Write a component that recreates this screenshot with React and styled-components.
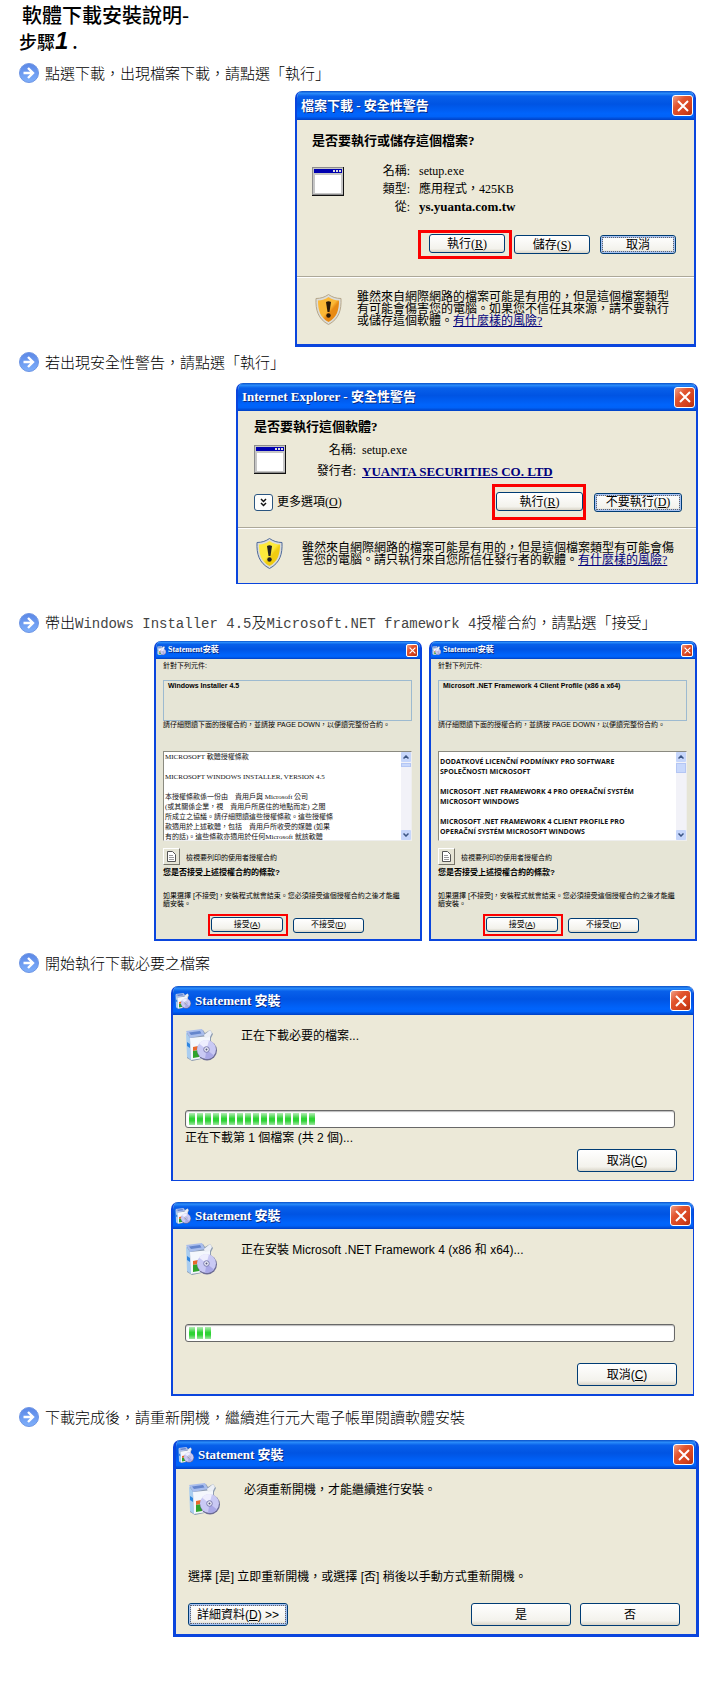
import styled, { createGlobalStyle, css } from "styled-components";

const GlobalStyle = createGlobalStyle`
    * {
        box-sizing: border-box;
        margin: 0;
        padding: 0;
    }

    body {
        background: #fff;
        color: #000;
        font-family: "Liberation Sans", "Noto Sans CJK TC", sans-serif;
        font-size: 12px;
    }
`;

const serif = `"Liberation Serif", "Noto Sans CJK TC", serif`;
const sans = `"Liberation Sans", "Noto Sans CJK TC", sans-serif`;

const Page = styled.main`
    display: flex;
    flex-direction: column;
    padding: 2px 12px 52px 19px;
`;

const PageTitle = styled.h1`
    padding-left: 3px;
    font-family: "Noto Sans CJK TC", sans-serif;
    font-size: 20px;
    font-weight: 500;
    line-height: 26px;
`;

const PageSubtitle = styled.h2`
    margin-bottom: 9px;
    font-family: "Noto Sans CJK TC", sans-serif;
    font-size: 18px;
    font-weight: 500;
    line-height: 26px;
`;

const StepNumber = styled.span`
    margin-right: 4px;
    font-family: "Liberation Sans", sans-serif;
    font-size: 24px;
    font-style: italic;
    font-weight: 700;
`;

const Step = styled.section`
    display: flex;
    flex-direction: column;
    gap: ${({ $gap }) => $gap}px;
    margin-bottom: ${({ $after }) => $after || 0}px;
`;

const StepHeading = styled.h3`
    display: flex;
    align-items: center;
    gap: 6px;
    height: 20px;
    color: #000;
    font-family: "Noto Sans CJK TC", sans-serif;
    font-size: 15px;
    font-weight: 300;
    line-height: 20px;
    white-space: nowrap;

    svg {
        flex: none;
    }
`;

const Mono = styled.span`
    color: #444;
    font-family: "Liberation Mono", monospace;
    font-size: 14px;
`;

const Dialogs = styled.div`
    display: flex;
    flex-direction: ${({ $stacked }) => ($stacked ? "column" : "row")};
    justify-content: flex-end;
    align-items: ${({ $stacked }) => ($stacked ? "flex-end" : "stretch")};
    gap: ${({ $gap }) => $gap || 0}px;
    padding-right: ${({ $inset }) => $inset || 0}px;
`;

const Window = styled.article`
    width: 100%;
    max-width: ${({ $width }) => $width}px;
    border: solid #0a45dd;
    border-width: ${({ $edge }) => $edge};
    border-radius: 7px 7px 0 0;
    background: ${({ $small }) => ($small ? "#e6e5d6" : "#ece9d8")};
    overflow: hidden;
`;

const barPadding = ({ $small, $icon }) => {
    if ($small) return "0 2px 0 1px";
    return $icon ? "0 2px" : "0 1px 0 4px";
};

const TitleBar = styled.header`
    display: flex;
    align-items: center;
    gap: ${({ $small }) => ($small ? 2 : 4)}px;
    height: ${({ $height }) => $height}px;
    padding: ${barPadding};
    background: linear-gradient(
        #0a50c8 0,
        #2a8cfa 8%,
        #0860ea 18%,
        #0054e3 45%,
        #0064fc 78%,
        #0062f8 88%,
        #0040c4 100%
    );
    color: #fff;

    svg {
        flex: none;
    }
`;

const TitleText = styled.h4`
    flex: 1;
    font-family: ${serif};
    font-size: ${({ $small }) => ($small ? 8 : 13)}px;
    font-weight: 700;
    line-height: 16px;
    text-shadow: 1px 1px 0 #0a2a80;
    white-space: nowrap;
`;

const CloseButton = styled.button`
    display: flex;
    align-items: center;
    justify-content: center;
    width: ${({ $small }) => ($small ? 12 : 21)}px;
    height: ${({ $small }) => ($small ? 13 : 21)}px;
    border: 1px solid #fff;
    border-radius: ${({ $small }) => ($small ? 2 : 3)}px;
    background: linear-gradient(135deg, #f0a088, #e2552f 35%, #d3401c 75%, #b03010);
    color: #fff;
`;

const Body = styled.div`
    display: flex;
    flex-direction: column;
    padding: ${({ $pad }) => $pad};
`;

const Question = styled.p`
    font-family: ${serif};
    font-size: 13px;
    font-weight: 700;
    line-height: 16px;
`;

const FileInfo = styled.div`
    display: flex;
    margin-top: ${({ $top }) => $top}px;

    svg {
        flex: none;
        margin-top: 5px;
    }
`;

const Details = styled.dl`
    display: grid;
    grid-template-columns: ${({ $label }) => $label}px auto;
    column-gap: ${({ $gap }) => $gap}px;
    font-family: ${serif};
    font-size: 12px;
    line-height: ${({ $line }) => $line}px;

    dt {
        text-align: right;
    }

    dd {
        white-space: nowrap;
    }
`;

const Strong = styled.strong`
    font-size: 13px;
`;

const Link = styled.a`
    color: #00007c;
    text-decoration: underline;
`;

const Actions = styled.div`
    display: flex;
    align-items: center;
    justify-content: flex-end;
    gap: ${({ $gap }) => $gap}px;
    margin-top: ${({ $top }) => $top || 0}px;
`;

const Highlight = styled.div`
    padding: ${({ $pad }) => $pad};
    border: ${({ $thin }) => ($thin ? 2 : 3)}px solid #fb0000;
`;

const PushButton = styled.button`
    display: block;
    width: ${({ $width }) => $width}px;
    height: ${({ $height }) => $height}px;
    border: 1px solid #003c74;
    border-radius: 3px;
    background: linear-gradient(#fff, #f3f2ec 80%, #d9d5c8);
    color: #000;
    font-family: ${({ $serif }) => ($serif ? serif : sans)};
    font-size: ${({ $small }) => ($small ? 8 : 12)}px;
    line-height: 12px;
    white-space: nowrap;

    ${({ $focused }) =>
        $focused &&
        css`
            box-shadow: inset 0 0 0 2px #a9c3f2;
            outline: 1px dotted #666;
            outline-offset: -3px;
        `}

    ${({ $pushLeft }) =>
        $pushLeft &&
        css`
            margin-right: auto;
        `}
`;

const MoreOptions = styled.label`
    display: flex;
    align-items: center;
    gap: 4px;
    margin-right: auto;
    font-family: ${serif};
    font-size: 12px;
    line-height: 16px;
`;

const IconButton = styled.button`
    display: flex;
    align-items: center;
    justify-content: center;
    width: 19px;
    height: 17px;
    border: 1px solid #2a5580;
    border-radius: 3px;
    background: #fdfdfb;
`;

const Advice = styled.footer`
    display: flex;
    align-items: center;
    gap: ${({ $gap }) => $gap}px;
    padding: ${({ $pad }) => $pad};
    border-top: 1px solid #aca899;
    box-shadow: inset 0 1px 0 #fff;
    font-family: ${serif};
    font-size: 12px;
    line-height: 12px;

    svg {
        flex: none;
    }
`;

const SmallText = styled.p`
    margin-top: ${({ $top }) => $top || 0}px;
    font-size: 7px;
    line-height: ${({ $line }) => $line || 8}px;
`;

const Component = styled.div`
    height: 41px;
    margin-top: 9px;
    padding: 0 4px;
    border: 1px solid #9dbad0;
    font-size: 7px;
    font-weight: 700;
    line-height: 10px;
`;

const Agreement = styled.div`
    display: flex;
    height: 90px;
    margin-top: 22px;
    border: 1px solid #8a8a80;
    border-right-color: #eee;
    border-bottom-color: #eee;
    background: #fff;
`;

const AgreementText = styled.textarea`
    flex: 1;
    min-width: 0;
    padding: ${({ $bold }) => ($bold ? 5 : 0)}px 0 0 1px;
    border: 0;
    outline: 0;
    resize: none;
    overflow: hidden;
    background: #fff;
    color: #111;
    font-family: ${({ $bold }) => ($bold ? `"Open Sans", sans-serif` : serif)};
    font-size: 7px;
    font-weight: ${({ $bold }) => ($bold ? 700 : 400)};
    line-height: 10px;
    white-space: pre;
`;

const Scrollbar = styled.div`
    display: flex;
    flex-direction: column;
    width: 10px;
    background: #f2f2f8;
`;

const ScrollArrow = styled.button`
    display: flex;
    align-items: center;
    justify-content: center;
    height: 10px;
    border: 0;
    border-radius: 1px;
    background: #c6d6fb;
`;

const ScrollThumb = styled.div`
    height: ${({ $height }) => $height}px;
    margin: 1px 0 auto;
    border: 1px solid #b4c6f4;
    background: #c8d8fc;
`;

const PrintRow = styled.label`
    display: flex;
    align-items: center;
    gap: 6px;
    height: 17px;
    margin-top: 7px;
    font-size: 7px;
`;

const PrintButton = styled.button`
    display: flex;
    align-items: center;
    justify-content: center;
    width: 17px;
    height: 17px;
    border: 1px solid;
    border-color: #fff #77756a #77756a #fff;
    background: #e6e5d6;
`;

const SmallQuestion = styled.p`
    margin-top: 3px;
    font-size: 8px;
    font-weight: 700;
    line-height: 10px;
`;

const LicenseActions = styled.div`
    display: flex;
    align-items: center;
    gap: 5px;
    margin-top: 6px;
    padding-left: 45px;
`;

const Message = styled.div`
    display: flex;
    align-items: flex-start;
    gap: 24px;
    line-height: 14px;

    svg {
        flex: none;
    }
`;

const ProgressTrack = styled.div`
    display: flex;
    gap: 2px;
    height: 18px;
    margin: 49px 2px 3px 0;
    padding: 2px 3px;
    border: 1px solid #686868;
    border-radius: 3px;
    background: #fff;
    box-shadow: inset 0 1px 1px #bbb;
`;

const ProgressBlock = styled.span`
    width: 6px;
    height: 12px;
    background: linear-gradient(#b4ecb6, #2fd335 45%, #2fd335 65%, #a0e6a2);
`;

const Status = styled.p`
    min-height: 14px;
    margin-top: ${({ $top }) => $top || 0}px;
    line-height: 14px;
`;

const ArrowIcon = () => (
    <svg width="20" height="20" viewBox="0 0 20 20">
        <defs>
            <linearGradient id="arrow-bg" x1="0" y1="0" x2="0" y2="1">
                <stop offset="0" stopColor="#5b87e6" />
                <stop offset="1" stopColor="#7fb0fb" />
            </linearGradient>
        </defs>
        <circle cx="10" cy="10" r="9.5" fill="url(#arrow-bg)" stroke="#6f96e4" />
        <path
            d="M4.5 10h9.5M9 5l5 5-5 5"
            fill="none"
            stroke="#fff"
            strokeWidth="2.4"
        />
    </svg>
);

const CrossIcon = ({ size }) => (
    <svg width={size} height={size} viewBox="0 0 12 12">
        <path d="M1 1l10 10M11 1 1 11" stroke="#fff" strokeWidth="2" />
    </svg>
);

const ProgramIcon = () => (
    <svg width="32" height="29" viewBox="0 0 32 29">
        <path d="M0 0h32v29H0z" fill="#111" />
        <path d="M0 0h31v28H0z" fill="#8c8c8c" />
        <path d="M1 1h30v26H1z" fill="#c6c6c6" />
        <path d="M2 2h28v4H2z" fill="#0000b0" />
        <path d="M21 3h2v2h-2zM24 3h2v2h-2zM27 3h2v2h-2z" fill="#ddd" />
        <path d="M3 8h26v18H3z" fill="#fff" />
    </svg>
);

const ShieldIcon = ({ id, light, dark, rim, mark }) => (
    <svg width="27" height="31" viewBox="0 0 27 31">
        <defs>
            <linearGradient id={id} x1="0" y1="0" x2="1" y2="1">
                <stop offset="0" stopColor={light} />
                <stop offset="0.5" stopColor={light} />
                <stop offset="0.6" stopColor={dark} />
                <stop offset="1" stopColor={dark} />
            </linearGradient>
        </defs>
        <path
            d="M13.5 0.5C10 3 6 4.5 1 4.5C0.5 16 3 25 13.5 30.5C24 25 26.5 16 26 4.5C21 4.5 17 3 13.5 0.5z"
            fill="#dcdcd8"
            stroke={rim}
        />
        <path
            d="M13.5 3C10.5 5 7 6.500 3 6.500C3 16 5 23.500 13.500 28C22 23.500 24 16 24 6.500C20 6.500 16.500 5 13.500 3z"
            fill={`url(#${id})`}
        />
        <path d="M11 8q2.5-1.5 5 0l-1.500 10h-2z" fill={mark} />
        <circle cx="13.5" cy="21.5" r="2.2" fill={mark} />
    </svg>
);

const InstallerIcon = ({ size }) => (
    <svg width={size} height={size} viewBox="0 0 32 32">
        <path d="M2 4 18 1l2 3 5-3 3 4-2 4v19L7 32 2 29z" fill="#8e9cb0" />
        <path d="M1 3l4 6 1 22-4-3z" fill="#a9cdf0" />
        <path d="M2 13l3 2v4l-3-2z" fill="#2f86e0" />
        <path d="M5 9l20-2v21L6 31z" fill="#f4f7fd" />
        <path d="M1 2 17 0l3 6-15 3z" fill="#a9bdec" />
        <path d="M4 3.5 15 2l1.5 2.500L6 6z" fill="#6585cc" />
        <path d="M19 6l6-5 2 3-2 4-5 1z" fill="#eceff6" />
        <path d="M8 18l5-1v4l-5 1z" fill="#e8682c" />
        <path d="M8 22l6-1v7l-6 1z" fill="#2fa32c" />
        <circle cx="22" cy="21.5" r="10" fill="#6c6c94" />
        <circle cx="21.5" cy="20.5" r="9.5" fill="#c9c9f4" />
        <path d="M21.5 20.5 14 14.6A9.500 9.500 0 0 1 24 11.3z" fill="#eeeefe" />
        <path d="M21.5 20.5 29 26.4A9.500 9.500 0 0 1 20 29.8z" fill="#a9a8e6" />
        <circle cx="21.5" cy="20.5" r="2.8" fill="#eceef8" stroke="#7b7bb0" />
        <circle cx="21.5" cy="20.5" r="1" fill="#55557a" />
    </svg>
);

const DoubleChevronIcon = () => (
    <svg width="9" height="11" viewBox="0 0 9 11">
        <path
            d="M2 2l2.5 2.500L7 2M2 6l2.5 2.500L7 6"
            fill="none"
            stroke="#111"
            strokeWidth="1.5"
        />
    </svg>
);

const ChevronIcon = ({ up }) => (
    <svg width="6" height="4" viewBox="0 0 6 4">
        <path
            d={up ? "M0.5 3.5 3 1l2.5 2.5" : "M0.5 0.5 3 3 5.5 0.5"}
            fill="none"
            stroke="#3c5584"
            strokeWidth="1.5"
        />
    </svg>
);

const PageIcon = () => (
    <svg width="9" height="11" viewBox="0 0 9 11">
        <path d="M0.5 0.5h5l3 3v7h-8z" fill="#fff" stroke="#555" />
        <path d="M2 4.5h4M2 6.5h5M2 8.5h5" stroke="#999" />
    </svg>
);

const Dialog = ({ title, width, edge, bar = 29, icon, small, children }) => (
    <Window $width={width} $edge={edge} $small={small}>
        <TitleBar $height={bar} $small={small} $icon={icon}>
            {icon && <InstallerIcon size={small ? 9 : 16} />}
            <TitleText $small={small}>{title}</TitleText>
            <CloseButton $small={small} type="button" aria-label="關閉">
                <CrossIcon size={small ? 7 : 12} />
            </CloseButton>
        </TitleBar>
        {children}
    </Window>
);

const LicenseDialog = ({ id, title, component, bold, thumb, text }) => (
    <Dialog title={title} width={268} edge="0 2px 2px" bar={18} icon small>
        <Body $pad="2px 8px 3px 7px">
            <SmallText $line={10}>針對下列元件:</SmallText>
            <Component>{component}</Component>
            <SmallText>
                請仔細閱讀下面的授權合約，並請按 PAGE DOWN，以便讀完整份合約。
            </SmallText>
            <Agreement>
                <AgreementText
                    $bold={bold}
                    aria-label="授權合約"
                    defaultValue={text}
                    readOnly
                />
                <Scrollbar>
                    <ScrollArrow type="button" aria-label="向上">
                        <ChevronIcon up />
                    </ScrollArrow>
                    <ScrollThumb $height={thumb} />
                    <ScrollArrow type="button" aria-label="向下">
                        <ChevronIcon />
                    </ScrollArrow>
                </Scrollbar>
            </Agreement>
            <PrintRow htmlFor={id}>
                <PrintButton id={id} type="button">
                    <PageIcon />
                </PrintButton>
                檢視要列印的使用者授權合約
            </PrintRow>
            <SmallQuestion>您是否接受上述授權合約的條款?</SmallQuestion>
            <SmallText $top={14}>
                如果選擇 [不接受]，安裝程式就會結束。您必須接受這個授權合約之後才能繼
                <br />
                續安裝。
            </SmallText>
            <LicenseActions>
                <Highlight $thin $pad="1px 3px 2px 1px">
                    <PushButton type="button" $small $width={72} $height={15}>
                        接受(<u>A</u>)
                    </PushButton>
                </Highlight>
                <PushButton type="button" $small $width={71} $height={15}>
                    不接受(<u>D</u>)
                </PushButton>
            </LicenseActions>
        </Body>
    </Dialog>
);

const ProgressDialog = ({ message, blocks, status, width, edge, bar }) => (
    <Dialog title="Statement 安裝" width={width} edge={edge} bar={bar} icon>
        <Body $pad="14px 16px 8px 12px">
            <Message>
                <InstallerIcon size={32} />
                <p>{message}</p>
            </Message>
            <ProgressTrack role="progressbar" aria-label={message}>
                {Array.from({ length: blocks }, (_, i) => (
                    <ProgressBlock key={i} />
                ))}
            </ProgressTrack>
            <Status>{status}</Status>
            <Actions $top={4}>
                <PushButton type="button" $width={100} $height={23}>
                    取消(<u>C</u>)
                </PushButton>
            </Actions>
        </Body>
    </Dialog>
);

const installerTerms = `MICROSOFT 軟體授權條款

MICROSOFT WINDOWS INSTALLER, VERSION 4.5

本授權條款係一份由　貴用戶與 Microsoft 公司
(或其關係企業，視　貴用戶所居住的地點而定) 之間
所成立之協議。請仔細閱讀這些授權條款。這些授權條
款適用於上述軟體，包括　貴用戶所收受的媒體 (如果
有的話)。這些條款亦適用於任何Microsoft 就該軟體`;

const frameworkTerms = `DODATKOVÉ LICENČNÍ PODMÍNKY PRO SOFTWARE
SPOLEČNOSTI MICROSOFT

MICROSOFT .NET FRAMEWORK 4 PRO OPERAČNÍ SYSTÉM
MICROSOFT WINDOWS

MICROSOFT .NET FRAMEWORK 4 CLIENT PROFILE PRO
OPERAČNÍ SYSTÉM MICROSOFT WINDOWS`;

const App = () => {
    return (
        <>
            <GlobalStyle />
            <Page lang="zh-TW">
                <PageTitle>軟體下載安裝說明-</PageTitle>
                <PageSubtitle>
                    步驟<StepNumber>1</StepNumber>.
                </PageSubtitle>

                <Step $gap={8} $after={5}>
                    <StepHeading>
                        <ArrowIcon />
                        點選下載，出現檔案下載，請點選「執行」
                    </StepHeading>
                    <Dialogs $inset={3}>
                        <Dialog title="檔案下載 - 安全性警告" width={401} edge="0 2px 3px">
                            <Body $pad="13px 18px 17px 15px">
                                <Question>是否要執行或儲存這個檔案?</Question>
                                <FileInfo $top={13}>
                                    <ProgramIcon />
                                    <Details $label={66} $gap={9} $line={18}>
                                        <dt>名稱:</dt>
                                        <dd>setup.exe</dd>
                                        <dt>類型:</dt>
                                        <dd>應用程式，425KB</dd>
                                        <dt>從:</dt>
                                        <dd>
                                            <Strong>ys.yuanta.com.tw</Strong>
                                        </dd>
                                    </Details>
                                </FileInfo>
                                <Actions $top={14} $gap={2}>
                                    <Highlight $pad="1px 4px 3px 8px">
                                        <PushButton type="button" $serif $width={76} $height={19}>
                                            執行(<u>R</u>)
                                        </PushButton>
                                    </Highlight>
                                    <Actions $gap={10}>
                                        <PushButton type="button" $serif $width={76} $height={19}>
                                            儲存(<u>S</u>)
                                        </PushButton>
                                        <PushButton
                                            type="button"
                                            $serif
                                            $focused
                                            $width={76}
                                            $height={19}
                                        >
                                            取消
                                        </PushButton>
                                    </Actions>
                                </Actions>
                            </Body>
                            <Advice $gap={15} $pad="14px 18px 17px 18px">
                                <ShieldIcon
                                    id="shield-orange"
                                    light="#fbb836"
                                    dark="#e88a14"
                                    rim="#b5a68a"
                                    mark="#2a1a08"
                                />
                                <p>
                                    雖然來自網際網路的檔案可能是有用的，但是這個檔案類型有可能會傷害您的電腦。如果您不信任其來源，請不要執行或儲存這個軟體。
                                    <Link href="#risk">有什麼樣的風險?</Link>
                                </p>
                            </Advice>
                        </Dialog>
                    </Dialogs>
                </Step>

                <Step $gap={11} $after={29}>
                    <StepHeading>
                        <ArrowIcon />
                        若出現安全性警告，請點選「執行」
                    </StepHeading>
                    <Dialogs $inset={1}>
                        <Dialog
                            title="Internet Explorer - 安全性警告"
                            width={462}
                            edge="0 2px 1px"
                            bar={28}
                        >
                            <Body $pad="8px 14px 7px 16px">
                                <Question>是否要執行這個軟體?</Question>
                                <FileInfo $top={5}>
                                    <ProgramIcon />
                                    <Details $label={70} $gap={6} $line={21}>
                                        <dt>名稱:</dt>
                                        <dd>setup.exe</dd>
                                        <dt>發行者:</dt>
                                        <dd>
                                            <Link href="#publisher">
                                                <Strong>YUANTA SECURITIES CO. LTD</Strong>
                                            </Link>
                                        </dd>
                                    </Details>
                                </FileInfo>
                                <Actions $top={1} $gap={8}>
                                    <MoreOptions htmlFor="more-options">
                                        <IconButton id="more-options" type="button">
                                            <DoubleChevronIcon />
                                        </IconButton>
                                        <span>
                                            更多選項(<u>O</u>)
                                        </span>
                                    </MoreOptions>
                                    <Highlight $pad="5px 0 6px 1px">
                                        <PushButton type="button" $serif $width={87} $height={19}>
                                            執行(<u>R</u>)
                                        </PushButton>
                                    </Highlight>
                                    <PushButton
                                        type="button"
                                        $serif
                                        $focused
                                        $width={88}
                                        $height={19}
                                    >
                                        不要執行(<u>D</u>)
                                    </PushButton>
                                </Actions>
                            </Body>
                            <Advice $gap={19} $pad="10px 18px 14px 18px">
                                <ShieldIcon
                                    id="shield-yellow"
                                    light="#fdea3c"
                                    dark="#f0cc10"
                                    rim="#4e6a9c"
                                    mark="#222"
                                />
                                <p>
                                    雖然來自網際網路的檔案可能是有用的，但是這個檔案類型有可能會傷害您的電腦。請只執行來自您所信任發行者的軟體。
                                    <Link href="#risk">有什麼樣的風險?</Link>
                                </p>
                            </Advice>
                        </Dialog>
                    </Dialogs>
                </Step>

                <Step $gap={8} $after={12}>
                    <StepHeading>
                        <ArrowIcon />
                        <span>
                            帶出<Mono>Windows Installer 4.5</Mono>及
                            <Mono>Microsoft.NET framework 4</Mono>授權合約，請點選「接受」
                        </span>
                    </StepHeading>
                    <Dialogs $gap={7} $inset={2}>
                        <LicenseDialog
                            id="print-installer"
                            title="Statement安裝"
                            component="Windows Installer 4.5"
                            thumb={4}
                            text={installerTerms}
                        />
                        <LicenseDialog
                            id="print-framework"
                            title="Statement安裝"
                            component="Microsoft .NET Framework 4 Client Profile (x86 a x64)"
                            bold
                            thumb={10}
                            text={frameworkTerms}
                        />
                    </Dialogs>
                </Step>

                <Step $gap={13} $after={11}>
                    <StepHeading>
                        <ArrowIcon />
                        開始執行下載必要之檔案
                    </StepHeading>
                    <Dialogs $stacked $gap={21} $inset={5}>
                        <ProgressDialog
                            message="正在下載必要的檔案..."
                            blocks={16}
                            status="正在下載第 1 個檔案 (共 2 個)..."
                            width={523}
                            edge="0 1px 1px 2px"
                        />
                        <ProgressDialog
                            message="正在安裝 Microsoft .NET Framework 4 (x86 和 x64)..."
                            blocks={3}
                            width={523}
                            edge="0 1px 2px 2px"
                            bar={27}
                        />
                    </Dialogs>
                </Step>

                <Step $gap={13}>
                    <StepHeading>
                        <ArrowIcon />
                        下載完成後，請重新開機，繼續進行元大電子帳單閱讀軟體安裝
                    </StepHeading>
                    <Dialogs>
                        <Dialog title="Statement 安裝" width={526} edge="0 3px 3px" icon>
                            <Body $pad="14px 16px 8px 12px">
                                <Message>
                                    <InstallerIcon size={32} />
                                    <p>必須重新開機，才能繼續進行安裝。</p>
                                </Message>
                                <Status $top={55}>
                                    選擇 [是] 立即重新開機，或選擇 [否] 稍後以手動方式重新開機。
                                </Status>
                                <Actions $top={19} $gap={9}>
                                    <PushButton
                                        type="button"
                                        $focused
                                        $pushLeft
                                        $width={100}
                                        $height={23}
                                    >
                                        詳細資料(<u>D</u>) &gt;&gt;
                                    </PushButton>
                                    <PushButton type="button" $width={100} $height={23}>
                                        是
                                    </PushButton>
                                    <PushButton type="button" $width={100} $height={23}>
                                        否
                                    </PushButton>
                                </Actions>
                            </Body>
                        </Dialog>
                    </Dialogs>
                </Step>
            </Page>
        </>
    );
};

export default App;
